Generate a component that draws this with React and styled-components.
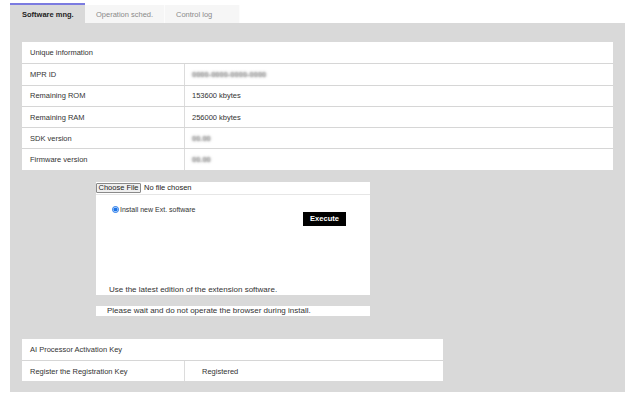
import styled, { createGlobalStyle } from "styled-components";

const GlobalStyle = createGlobalStyle`
  html, body {
    margin: 0;
    padding: 0;
    background: #fff;
  }
  body {
    font-family: "Liberation Sans", Arial, sans-serif;
    color: #333;
  }
`;

const infoRows = [
  { label: "MPR ID", value: "0000-0000-0000-0000", hidden: true },
  { label: "Remaining ROM", value: "153600 kbytes" },
  { label: "Remaining RAM", value: "256000 kbytes" },
  { label: "SDK version", value: "00.00", hidden: true },
  { label: "Firmware version", value: "00.00", hidden: true },
];

const App = () => {
  return (
    <Page>
      <GlobalStyle />
      <Tabs>
        <Tab $active $w={75}>Software mng.</Tab>
        <Tab $w={80}>Operation sched.</Tab>
        <Tab $w={75}>Control log</Tab>
      </Tabs>
      <Panel>
        <Table $w={591}>
          <Row>
            <HeadCell>Unique information</HeadCell>
          </Row>
          {infoRows.map((r) => (
            <Row key={r.label}>
              <LabelCell>{r.label}</LabelCell>
              <ValueCell>
                {r.hidden ? <Masked>{r.value}</Masked> : r.value}
              </ValueCell>
            </Row>
          ))}
        </Table>

        <Upload>
          <UploadBox>
            <FileRow>
              <FileButton type="button">Choose File</FileButton>
              <FileName>No file chosen</FileName>
            </FileRow>
            <OptionRow>
              <RadioLabel>
                <Radio type="radio" name="mode" defaultChecked />
                Install new Ext. software
              </RadioLabel>
              <Execute type="button">Execute</Execute>
            </OptionRow>
            <Note>Use the latest edition of the extension software.</Note>
          </UploadBox>
          <Warning>Please wait and do not operate the browser during install.</Warning>
        </Upload>

        <Table $w={421} $mt={23}>
          <Row>
            <HeadCell>AI Processor Activation Key</HeadCell>
          </Row>
          <Row>
            <LabelCell>Register the Registration Key</LabelCell>
            <ValueCell $pl={17}>Registered</ValueCell>
          </Row>
        </Table>
      </Panel>
    </Page>
  );
};

const Page = styled.div`
  width: 634px;
  height: 395px;
  overflow: hidden;
  background: #fff;
`;

const Tabs = styled.div`
  display: flex;
  align-items: flex-end;
  height: 23px;
  padding-left: 10px;
  box-sizing: border-box;
`;

const Tab = styled.div`
  width: ${(p) => p.$w}px;
  height: ${(p) => (p.$active ? 20 : 18)}px;
  box-sizing: border-box;
  display: flex;
  align-items: center;
  padding-left: ${(p) => (p.$active ? 12 : 11)}px;
  padding-top: ${(p) => (p.$active ? 1 : 0)}px;
  font-size: 7.5px;
  font-weight: ${(p) => (p.$active ? 700 : 400)};
  color: ${(p) => (p.$active ? "#222" : "#8a8a8a")};
  background: ${(p) => (p.$active ? "#d9d9d9" : "#f6f6f6")};
  border-top: ${(p) => (p.$active ? "2px solid #7b7be0" : "none")};
  border-right: ${(p) => (p.$active ? "none" : "1px solid #fcfcfc")};
`;

const Panel = styled.div`
  width: 615px;
  height: 369px;
  margin-left: 10px;
  box-sizing: border-box;
  background: #d9d9d9;
  padding: 19px 12px 0;
  display: flex;
  flex-direction: column;
  align-items: flex-start;
`;

const Table = styled.div`
  width: ${(p) => p.$w}px;
  margin-top: ${(p) => p.$mt || 0}px;
  background: #fff;
  display: flex;
  flex-direction: column;
`;

const Row = styled.div`
  display: flex;
  height: 21.3px;
  box-sizing: border-box;
  font-size: 7.5px;
  color: #333;
  & + & {
    border-top: 1px solid #d6d6d6;
  }
`;

const HeadCell = styled.div`
  display: flex;
  align-items: center;
  padding-left: 8px;
`;

const LabelCell = styled.div`
  width: 163px;
  flex-shrink: 0;
  box-sizing: border-box;
  display: flex;
  align-items: center;
  padding-left: 8px;
  border-right: 1px solid #dcdcdc;
`;

const ValueCell = styled.div`
  display: flex;
  align-items: center;
  padding-left: ${(p) => p.$pl || 7}px;
`;

const Masked = styled.span`
  color: transparent;
  font-weight: 700;
  text-shadow: 0 0 2.5px rgba(0, 0, 0, 0.55);
  user-select: none;
`;

const Upload = styled.div`
  margin: 12px 0 0 74px;
  width: 274px;
  display: flex;
  flex-direction: column;
`;

const UploadBox = styled.div`
  height: 113px;
  background: #fff;
  display: flex;
  flex-direction: column;
`;

const FileRow = styled.div`
  height: 13px;
  display: flex;
  align-items: center;
  border-bottom: 1px solid #e6e6e6;
  box-sizing: border-box;
  font-size: 7.5px;
`;

const FileButton = styled.button`
  height: 10px;
  width: 45px;
  padding: 0;
  margin: 0 3px 0 0;
  font-family: inherit;
  font-size: 7.5px;
  color: #222;
  background: #efefef;
  border: 1px solid #8a8a8a;
  border-radius: 1px;
  line-height: 8px;
`;

const FileName = styled.span`
  color: #222;
`;

const OptionRow = styled.div`
  display: flex;
  justify-content: space-between;
  align-items: flex-start;
  padding: 11px 24px 0 16px;
`;

const RadioLabel = styled.label`
  display: flex;
  align-items: center;
  gap: 1px;
  font-size: 7px;
  color: #333;
`;

const Radio = styled.input`
  width: 7px;
  height: 7px;
  margin: 0;
  accent-color: #1a73e8;
`;

const Execute = styled.button`
  margin-top: 6px;
  width: 43px;
  height: 14px;
  padding: 0;
  background: #000;
  color: #fff;
  border: none;
  font-family: inherit;
  font-size: 7.5px;
  font-weight: 700;
`;

const Note = styled.div`
  margin-top: auto;
  padding: 0 0 1px 13px;
  font-size: 8px;
  color: #333;
`;

const Warning = styled.div`
  margin-top: 11px;
  height: 10px;
  background: #fff;
  display: flex;
  align-items: center;
  padding-left: 11px;
  font-size: 8px;
  color: #333;
`;

export default App;
